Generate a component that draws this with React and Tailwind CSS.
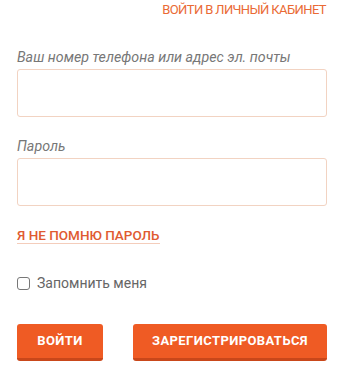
import { useState } from "react";

export default function App() {
  const [login, setLogin] = useState("");
  const [password, setPassword] = useState("");
  const [remember, setRemember] = useState(false);

  return (
    <div
      className="w-[343px] h-[373px] bg-white pl-[17px] pr-[16px] pt-[2px]"
      style={{ fontFamily: "Roboto, 'Liberation Sans', sans-serif" }}
    >
      <div className="flex justify-end pr-[1px]">
        <a
          href="#"
          className="text-[13px] leading-[16px] text-[#ea6a35] tracking-[-0.6px] uppercase"
        >
          Войти в личный кабинет
        </a>
      </div>

      <label className="block mt-[30px] text-[14.25px] leading-[18px] italic text-[#777]">
        Ваш номер телефона или адрес эл. почты
      </label>
      <input
        type="text"
        value={login}
        onChange={(e) => setLogin(e.target.value)}
        className="block mt-[3px] w-full h-[48px] px-3 border border-[#f2d3c2] rounded-[3px] outline-none text-[15px] text-[#333]"
      />

      <label className="block mt-[20px] text-[14.25px] leading-[18px] italic text-[#777]">
        Пароль
      </label>
      <input
        type="password"
        value={password}
        onChange={(e) => setPassword(e.target.value)}
        className="block mt-[3px] w-full h-[48px] px-3 border border-[#f2d3c2] rounded-[3px] outline-none text-[15px] text-[#333]"
      />

      <div className="mt-[21px] flex">
        <a
          href="#"
          className="text-[13.5px] leading-[16px] font-medium text-[#e05a30] border-b border-[#f4cdbb] uppercase"
        >
          Я не помню пароль
        </a>
      </div>

      <label className="mt-[30px] flex items-center gap-[7px] cursor-pointer">
        <input
          type="checkbox"
          checked={remember}
          onChange={(e) => setRemember(e.target.checked)}
          className="appearance-none w-[13px] h-[13px] border border-[#777] rounded-[3px] bg-white checked:bg-[#ee5b24] checked:border-[#ee5b24]"
        />
        <span className="text-[14px] leading-[18px] text-[#666]">Запомнить меня</span>
      </label>

      <div className="mt-[32px] flex justify-between">
        <button className="w-[86px] h-[37px] rounded-[3px] bg-[#ef5b24] border-b-[3px] border-[#c9471a] text-white text-[13px] font-bold tracking-[0.4px] uppercase">
          Войти
        </button>
        <button className="w-[194px] h-[37px] rounded-[3px] bg-[#ef5b24] border-b-[3px] border-[#c9471a] text-white text-[13px] font-bold tracking-[0.4px] uppercase">
          Зарегистрироваться
        </button>
      </div>
    </div>
  );
}
